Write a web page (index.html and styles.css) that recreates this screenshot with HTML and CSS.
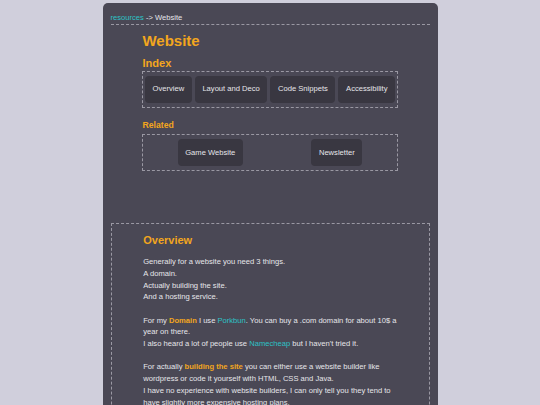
FILE: index.html
```html
<!DOCTYPE html>
<html lang="en">
<head>
<meta charset="utf-8">
<title>Website</title>
<link rel="stylesheet" href="styles.css">
</head>
<body>
<div class="page">
  <div class="crumb"><a class="link" href="#">resources</a> -&gt; Website</div>
  <div class="content">
    <h1 class="title">Website</h1>
    <h2 class="index-title">Index</h2>
    <div class="btn-box index-box">
      <a class="btn" href="#">Overview</a>
      <a class="btn" href="#">Layout and Deco</a>
      <a class="btn" href="#">Code Snippets</a>
      <a class="btn" href="#">Accessibility</a>
    </div>
    <h3 class="related-title">Related</h3>
    <div class="btn-box related-box">
      <a class="btn" href="#">Game Website</a>
      <a class="btn" href="#">Newsletter</a>
    </div>
  </div>
  <div class="section">
    <div class="section-body">
      <h2 class="section-title">Overview</h2>
      <p class="para first">Generally for a website you need 3 things.<br>A domain.<br>Actually building the site.<br>And a hosting service.</p>
      <p class="para">For my <b class="hl">Domain</b> I use <a class="link" href="#">Porkbun</a>. You can buy a .com domain for about 10$ a year on there.<br>I also heard a lot of people use <a class="link" href="#">Namecheap</a> but I haven't tried it.</p>
      <p class="para">For actually <b class="hl">building the site</b> you can either use a website builder like wordpress or code it yourself with HTML, CSS and Java.<br>I have no experience with website builders, I can only tell you they tend to have slightly more expensive hosting plans.</p>
      <p class="para">For <b class="hl">hosting</b> there are many options, some of them are even free for small static sites.</p>
    </div>
  </div>
</div>
</body>
</html>
```
FILE: styles.css
```css
html, body {
  margin: 0;
  padding: 0;
}
body {
  background: #d0cfdc;
  font-family: "Liberation Sans", Arial, sans-serif;
  font-size: 7.6px;
  line-height: 11.7px;
  color: #e6e6ea;
}
.page {
  width: 335px;
  margin: 3px auto 0;
  background: #4a4855;
  border-radius: 5px 5px 0 0;
  padding: 9px 8px 40px;
  box-sizing: border-box;
  min-height: 500px;
}
.link {
  color: #2cc3c6;
  text-decoration: none;
}
.crumb {
  border-bottom: 1px dashed #9a98a3;
}
.content {
  width: 80%;
  margin: 0 auto;
}
.title {
  margin: 7px 0 0;
  font-size: 15px;
  line-height: normal;
  font-weight: bold;
  color: #f2a61e;
}
.index-title {
  margin: 7.8px 0 0;
  font-size: 11.1px;
  line-height: normal;
  color: #f2a61e;
}
.related-title {
  margin: 12.4px 0 0;
  font-size: 8.7px;
  line-height: normal;
  color: #f2a61e;
}
.btn-box {
  display: flex;
  justify-content: space-around;
  border: 1px dashed #9a98a3;
  padding: 4px 0;
}
.index-box {
  margin-top: 2.4px;
}
.related-box {
  margin-top: 3.8px;
  padding: 4.3px 0;
}
.btn {
  display: block;
  padding: 7.6px;
  line-height: 11.6px;
  background: #393741;
  border-radius: 4px;
  color: #e6e6ea;
  text-decoration: none;
  white-space: nowrap;
}
.section {
  margin-top: 52px;
  border: 1px dashed #9a98a3;
  padding: 10px 0 20px;
}
.section-body {
  width: 80%;
  margin: 0 auto;
}
.section-title {
  margin: 0;
  font-size: 11px;
  line-height: normal;
  color: #f2a61e;
}
.para {
  margin: 11.7px 0 0;
}
.para.first {
  margin-top: 9.9px;
}
.hl {
  color: #f2a61e;
}
```
